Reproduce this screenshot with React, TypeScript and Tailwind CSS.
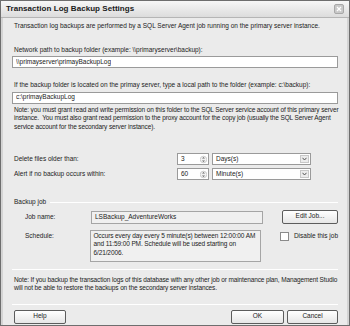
import React from 'react';

const TextBox: React.FC<{ value: string; className?: string }> = ({ value, className = '' }) => (
  <div className={`h-[12px] bg-white border border-[#9a9a9a] flex items-center px-[3px] ${className}`}>
    <span className="truncate">{value}</span>
  </div>
);

const SpinBox: React.FC<{ value: string }> = ({ value }) => (
  <div className="w-[32px] h-[12px] bg-white border border-[#9a9a9a] flex items-center justify-between pl-[3px] pr-[1px]">
    <span>{value}</span>
    <svg width="7" height="9" viewBox="0 0 7 9">
      <circle cx="3.5" cy="4.5" r="3.3" fill="#f2f2f2" stroke="#b5b5b5" strokeWidth="0.6" />
      <path d="M2 3.6 L3.5 2 L5 3.6 Z M2 5.4 L3.5 7 L5 5.4 Z" fill="#666" />
    </svg>
  </div>
);

const Combo: React.FC<{ value: string }> = ({ value }) => (
  <div className="w-[99px] h-[12px] bg-white border border-[#9a9a9a] flex items-center justify-between pl-[3px] pr-[1px]">
    <span>{value}</span>
    <div className="w-[9px] h-[8px] bg-[#ececec] border border-[#c8c8c8] flex items-center justify-center">
      <svg width="5" height="4" viewBox="0 0 5 4">
        <path d="M0.5 0.8 L2.5 3 L4.5 0.8" stroke="#555" strokeWidth="1" fill="none" />
      </svg>
    </div>
  </div>
);

const Btn: React.FC<{ label: string; className?: string }> = ({ label, className = '' }) => (
  <div className={`h-[14px] rounded-[2px] border border-[#5c5c5c] bg-gradient-to-b from-white to-[#e6e6e6] flex items-center justify-center ${className}`}>
    {label}
  </div>
);

export default function App() {
  return (
    <div
      className="w-[350px] h-[326px] bg-[#ebebeb] text-[#222] text-[6.5px] leading-[8.5px] flex flex-col border border-[#6e6e6e] overflow-hidden"
      style={{ fontFamily: '"Liberation Sans", Arial, sans-serif' }}
    >
      {/* Title bar */}
      <div className="h-[17px] shrink-0 bg-gradient-to-b from-[#f7f7f7] to-[#dcdcdc] border-b border-[#b5b5b5] flex items-center justify-between pl-[5px] pr-[5px]">
        <span className="font-bold text-[8px] tracking-[0.05px] text-[#1a1a1a]">Transaction Log Backup Settings</span>
        <div className="w-[10px] h-[10px] rounded-[2px] bg-[#c9c9c9] border border-[#a8a8a8] flex items-center justify-center">
          <svg width="6" height="6" viewBox="0 0 6 6">
            <path d="M1 1 L5 5 M5 1 L1 5" stroke="#fff" strokeWidth="1.3" />
          </svg>
        </div>
      </div>

      <div className="flex-1 flex flex-col px-[9px] border-x-[2px] border-[#d4d4d4]">
        <p className="mt-[4px] pl-[2px]">Transaction log backups are performed by a SQL Server Agent job running on the primary server instance.</p>

        <p className="mt-[15px] pl-[2px]">Network path to backup folder (example: \\primaryserver\backup):</p>
        <TextBox value="\\primayserver\primayBackupLog" className="mt-[2px]" />

        <p className="mt-[13px] pl-[2px]">If the backup folder is located on the primay server, type a local path to the folder (example: c:\backup):</p>
        <TextBox value="c:\primayBackupLog" className="mt-[2px]" />

        <p className="mt-[2px] pl-[2px] -mr-[4px] tracking-[-0.12px]">
          Note: you must grant read and write permission on this folder to the SQL Server service account of this primary server instance.&nbsp; You must also grant read permission to the proxy account for the copy job (usually the SQL Server Agent service account for the secondary server instance).
        </p>

        <div className="mt-[22px] flex items-center">
          <span className="w-[165px] pl-[2px]">Delete files older than:</span>
          <SpinBox value="3" />
          <div className="w-[3px]" />
          <Combo value="Days(s)" />
        </div>
        <div className="mt-[3px] flex items-center">
          <span className="w-[165px] pl-[2px]">Alert if no backup occurs within:</span>
          <SpinBox value="60" />
          <div className="w-[3px]" />
          <Combo value="Minute(s)" />
        </div>

        <div className="mt-[18px] flex items-center gap-[4px] pl-[2px]">
          <span>Backup job</span>
          <div className="flex-1 h-px bg-[#c4c4c4] border-b border-white" />
        </div>

        <div className="mt-[3px] flex items-start">
          <span className="w-[79px] pl-[13px] mt-[3px]">Job name:</span>
          <div className="w-[172px] h-[13px] bg-[#f0f0f0] border border-[#a5a5a5] flex items-center px-[3px] mt-[1px]">LSBackup_AdventureWorks</div>
          <Btn label="Edit Job..." className="ml-[19px] flex-1" />
        </div>

        <div className="mt-[6px] flex items-start">
          <span className="w-[79px] pl-[13px] mt-[2px]">Schedule:</span>
          <div className="w-[172px] h-[32px] bg-[#f0f0f0] border border-[#a5a5a5] pl-[2px] pr-0 pt-[1px] tracking-[-0.1px]">
            Occurs every day every 5 minute(s) between 12:00:00 AM and 11:59:00 PM. Schedule will be used starting on 6/21/2006.
          </div>
          <div className="ml-[19px] flex items-center gap-[5px] mt-[2px] whitespace-nowrap">
            <div className="w-[9px] h-[9px] shrink-0 bg-white border border-[#8a8a8a]" />
            <span>Disable this job</span>
          </div>
        </div>

        <div className="mt-[7px] h-px bg-[#c4c4c4] border-b border-white" />

        <p className="mt-[6px] pl-[2px] -mr-[4px] tracking-[-0.12px]">
          Note: If you backup the transaction logs of this database with any other job or maintenance plan, Management Studio will not be able to restore the backups on the secondary server instances.
        </p>

        <div className="mt-[11px] h-px bg-[#c4c4c4] border-b border-white" />

        <div className="mt-[5px] flex items-center">
          <Btn label="Help" className="w-[52px] ml-[2px]" />
          <div className="flex-1" />
          <Btn label="OK" className="w-[53px]" />
          <Btn label="Cancel" className="w-[51px] ml-[3px]" />
        </div>
      </div>
    </div>
  );
}
